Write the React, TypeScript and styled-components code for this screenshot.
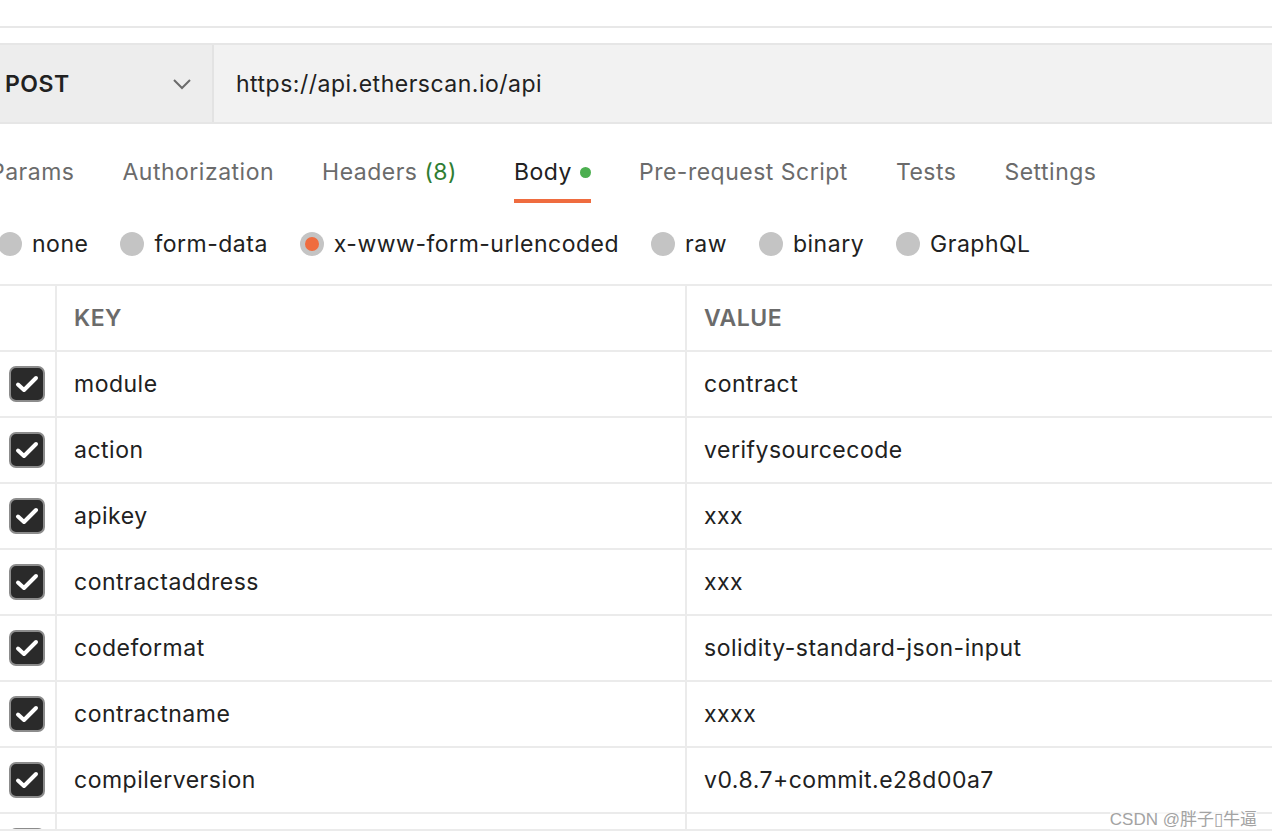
import styled, { createGlobalStyle } from "styled-components";

const GlobalStyle = createGlobalStyle`
  html, body {
    margin: 0;
    padding: 0;
    background: #ffffff;
  }
  * {
    box-sizing: border-box;
  }
`;

const Page = styled.div`
  position: relative;
  width: 1272px;
  height: 838px;
  overflow: hidden;
  background: #ffffff;
  font-family: Inter, "Noto Sans", sans-serif;
  letter-spacing: 0.5px;
  color: #212121;
`;

const TopStrip = styled.div`
  height: 28px;
  border-bottom: 2px solid #e8e8e8;
  margin-bottom: 15px;
`;

const RequestBar = styled.div`
  display: flex;
  height: 81px;
  border-top: 2px solid #e6e6e6;
  border-bottom: 2px solid #e6e6e6;
`;

const Method = styled.div`
  width: 214px;
  display: flex;
  align-items: center;
  justify-content: space-between;
  padding: 0 20px 0 5px;
  background: #ededed;
  border-right: 2px solid #e3e3e3;
  font-size: 23px;
  font-weight: 600;
  color: #212121;
`;

const Url = styled.div`
  flex: 1;
  display: flex;
  align-items: center;
  padding-left: 22px;
  background: #f2f2f2;
  font-size: 23px;
  color: #212121;
`;

const TabRow = styled.div`
  display: flex;
  gap: 48px;
  margin-left: -10px;
`;

const Tab = styled.div<{ $active?: boolean }>`
  display: flex;
  align-items: center;
  gap: 8px;
  padding: 35px 0 13px;
  line-height: 27px;
  font-size: 23px;
  color: ${(p) => (p.$active ? "#212121" : "#6b6b6b")};
  border-bottom: 4px solid ${(p) => (p.$active ? "#ef6c3f" : "transparent")};
`;

const Count = styled.span`
  color: #2e7d32;
  padding-right: 9px;
`;

const Dot = styled.span`
  width: 11px;
  height: 11px;
  border-radius: 50%;
  background: #4caf50;
`;

const RadioRow = styled.div`
  display: flex;
  align-items: center;
  gap: 32px;
  padding: 29px 0 28px;
  margin-left: -2px;
`;

const RadioItem = styled.label`
  display: flex;
  align-items: center;
  gap: 10px;
  font-size: 23px;
  line-height: 24px;
  color: #212121;
`;

const RadioCircle = styled.span<{ $checked?: boolean }>`
  width: 24px;
  height: 24px;
  border-radius: 50%;
  background: #c4c4c4;
  display: flex;
  align-items: center;
  justify-content: center;
  &::after {
    content: "";
    width: 14px;
    height: 14px;
    border-radius: 50%;
    background: ${(p) => (p.$checked ? "#ef6c3f" : "transparent")};
  }
`;

const Table = styled.div`
  height: 547px;
  overflow: hidden;
  border-top: 2px solid #ebebeb;
  border-bottom: 2px solid #ebebeb;
`;

const Row = styled.div`
  display: grid;
  grid-template-columns: 57px 630px 1fr;
  height: 66px;
  border-bottom: 2px solid #ebebeb;
`;

const Cell = styled.div<{ $header?: boolean }>`
  display: flex;
  align-items: center;
  padding-left: 17px;
  font-size: 23px;
  font-weight: ${(p) => (p.$header ? 600 : 400)};
  color: ${(p) => (p.$header ? "#6b6b6b" : "#212121")};
  border-right: 2px solid #ebebeb;
  &:last-child {
    border-right: none;
  }
`;

const CheckCell = styled.div`
  display: flex;
  align-items: center;
  justify-content: center;
  padding-right: 1px;
  border-right: 2px solid #ebebeb;
`;

const CheckBox = styled.span`
  width: 36px;
  height: 36px;
  border-radius: 7px;
  background: #2a2a2a;
  border: 2px solid #8c8c8c;
  display: flex;
  align-items: center;
  justify-content: center;
`;

const Watermark = styled.div`
  position: absolute;
  right: 15px;
  bottom: 8px;
  font-family: "Liberation Sans", "Noto Sans CJK SC", sans-serif;
  font-size: 17px;
  letter-spacing: 0;
  color: #a3a3a3;
  background: rgba(255, 255, 255, 0.6);
`;

const tabs = [
  { label: "Params" },
  { label: "Authorization" },
  { label: "Headers", count: "(8)" },
  { label: "Body", active: true, dot: true },
  { label: "Pre-request Script" },
  { label: "Tests" },
  { label: "Settings" },
];

const bodyTypes = [
  { label: "none" },
  { label: "form-data" },
  { label: "x-www-form-urlencoded", checked: true },
  { label: "raw" },
  { label: "binary" },
  { label: "GraphQL" },
];

const params = [
  ["module", "contract"],
  ["action", "verifysourcecode"],
  ["apikey", "xxx"],
  ["contractaddress", "xxx"],
  ["codeformat", "solidity-standard-json-input"],
  ["contractname", "xxxx"],
  ["compilerversion", "v0.8.7+commit.e28d00a7"],
  ["", ""],
];

function Check() {
  return (
    <CheckBox>
      <svg width="24" height="20" viewBox="0 0 24 20">
        <path
          d="M3 10.5 L9 16 L21 4"
          fill="none"
          stroke="#ffffff"
          strokeWidth="4"
          strokeLinecap="round"
          strokeLinejoin="round"
        />
      </svg>
    </CheckBox>
  );
}

export default function App() {
  return (
    <Page>
      <GlobalStyle />
      <TopStrip />
      <RequestBar>
        <Method>
          POST
          <svg width="20" height="12" viewBox="0 0 20 12">
            <path d="M2 2 L10 10 L18 2" fill="none" stroke="#6b6b6b" strokeWidth="2" />
          </svg>
        </Method>
        <Url>https://api.etherscan.io/api</Url>
      </RequestBar>
      <TabRow>
        {tabs.map((t) => (
          <Tab key={t.label} $active={t.active}>
            <span>
              {t.label}
              {t.count && <Count> {t.count}</Count>}
            </span>
            {t.dot && <Dot />}
          </Tab>
        ))}
      </TabRow>
      <RadioRow>
        {bodyTypes.map((b) => (
          <RadioItem key={b.label}>
            <RadioCircle $checked={b.checked} />
            {b.label}
          </RadioItem>
        ))}
      </RadioRow>
      <Table>
        <Row>
          <CheckCell />
          <Cell $header>KEY</Cell>
          <Cell $header>VALUE</Cell>
        </Row>
        {params.map(([k, v], i) => (
          <Row key={i}>
            <CheckCell>
              <Check />
            </CheckCell>
            <Cell>{k}</Cell>
            <Cell>{v}</Cell>
          </Row>
        ))}
      </Table>
      <Watermark>CSDN @胖子▯牛逼</Watermark>
    </Page>
  );
}
